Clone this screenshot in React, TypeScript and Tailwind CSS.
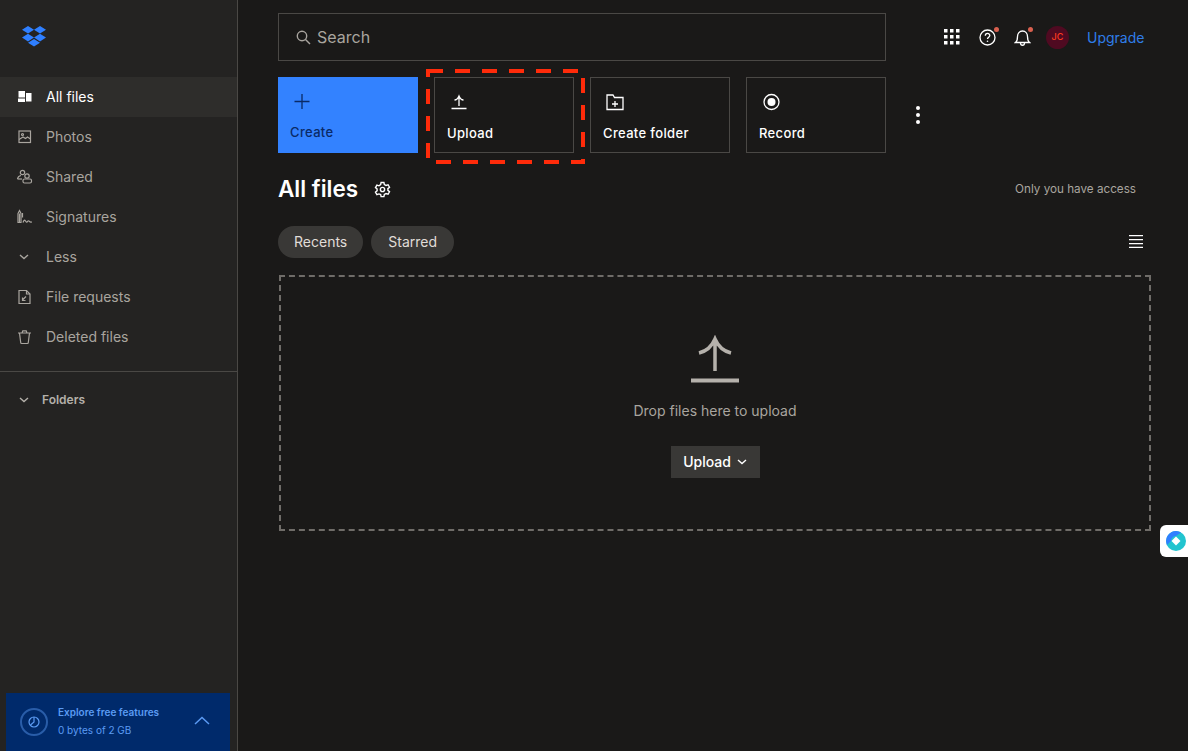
import type { ReactNode } from "react";

const font = "font-['Inter','Liberation_Sans',sans-serif]";

function Svg({ size = 18, children, className = "" }: { size?: number; children: ReactNode; className?: string }) {
  return (
    <svg width={size} height={size} viewBox="0 0 18 18" fill="none" stroke="currentColor" strokeWidth="1.2" className={className}>
      {children}
    </svg>
  );
}

const navItems: { label: string; active?: boolean; icon: ReactNode }[] = [
  {
    label: "All files",
    active: true,
    icon: (
      <Svg>
        <path d="M2.500 3h6.500v6.500H2.500zM2 10.500h7V14H2zM10 5h5.500v8.500H10z" fill="currentColor" stroke="none" />
      </Svg>
    ),
  },
  {
    label: "Photos",
    icon: (
      <Svg>
        <rect x="3" y="3" width="11.500" height="11.500" />
        <path d="M3 11.500 7 9l2.500 1.500 2-1.500 3 2" />
        <circle cx="6.500" cy="6.500" r="1" />
      </Svg>
    ),
  },
  {
    label: "Shared",
    icon: (
      <Svg>
        <circle cx="6.500" cy="4.500" r="2.200" />
        <path d="M1.500 11c.3-2 1.500-3.200 3.500-3.500" />
        <path d="M1.500 11H6" />
        <circle cx="11" cy="8" r="2.200" />
        <rect x="7" y="11" width="8.500" height="4" rx="1.500" />
      </Svg>
    ),
  },
  {
    label: "Signatures",
    icon: (
      <Svg>
        <path d="M2 5.500 3.500 2.500 5 5.500V14.500H2z" />
        <path d="M3.500 5.500V14.500M6.500 5v4.500" />
        <path d="M7 14.500c1-2.500 1.500-3 2.500-1.500s1 1.500 2 .5 1-1 2 0 1 .5 2.500.5" />
      </Svg>
    ),
  },
  {
    label: "Less",
    icon: (
      <Svg>
        <path d="m4 7 4 3.500L12 7" strokeWidth="1.400" />
      </Svg>
    ),
  },
  {
    label: "File requests",
    icon: (
      <Svg>
        <path d="M3 2.500h7.500L14 6v9.500H3z" />
        <path d="M10.500 2.500V6H14" />
        <path d="M10 8.500 6.500 12M6.500 9.500V12.500H9.500" />
      </Svg>
    ),
  },
  {
    label: "Deleted files",
    icon: (
      <Svg>
        <path d="M2 5h13M6 5l.8-2.200h3.400L11 5" />
        <path d="M3.500 5l1.200 9.500c0 .6.400 1 1 1h5.600c.6 0 1-.4 1-1L13.500 5" />
      </Svg>
    ),
  },
];

function Sidebar() {
  return (
    <aside className="flex h-full w-[238px] shrink-0 flex-col border-r border-[#4a4845] bg-[#242322]">
      <div className="flex h-[77px] items-start pl-[21px] pt-[26px]">
        <svg width="26" height="21" viewBox="0 0 26 21" fill="#2f7fff">
          <path d="M7 0l6 3.800L7 7.600 1 3.800zM19 0l6 3.800-6 3.800-6-3.800zM7 7.800l6 3.800-6 3.800-6-3.800zM19 7.800l6 3.800-6 3.800-6-3.800zM13 13l6 3.800L13 20.600 7 16.800z" />
        </svg>
      </div>
      <nav className="flex flex-col">
        {navItems.map((item) => (
          <div
            key={item.label}
            className={`flex h-10 items-center gap-[12px] pl-[16px] text-sm ${item.active ? "bg-[#2e2d2b] text-white" : "text-[#a9a59f]"}`}
          >
            {item.icon}
            <span>{item.label}</span>
          </div>
        ))}
      </nav>
      <div className="mt-[14px] border-t border-[#4a4845]" />
      <div className="mt-[19px] flex items-center gap-[8px] pl-[16px] text-xs font-semibold text-[#b4b0aa]">
        <Svg>
          <path d="m4 7 4 3.500L12 7" strokeWidth="1.400" />
        </Svg>
        <span>Folders</span>
      </div>
      <div className="mx-[6px] mt-auto flex h-[58px] w-[224px] items-center bg-[#002a6b] pl-[13px] pr-[20px] text-[#5b9bf3]">
        <svg width="30" height="30" viewBox="0 0 30 30" fill="none" stroke="currentColor">
          <circle cx="15" cy="15" r="13" strokeWidth="2" strokeOpacity="0.45" />
          <circle cx="15" cy="15" r="5" strokeWidth="1.200" />
          <path d="M15 10v5l-3.500 3" strokeWidth="1.200" />
        </svg>
        <div className="ml-[9px] flex -translate-y-[1px] flex-col gap-[2px] text-[10px] leading-4">
          <span className="font-semibold">Explore free features</span>
          <span>0 bytes of 2 GB</span>
        </div>
        <svg width="16" height="10" viewBox="0 0 16 10" fill="none" stroke="currentColor" strokeWidth="1.500" className="ml-auto -translate-y-[1px]">
          <path d="m1 8 7-6.500L15 8" />
        </svg>
      </div>
    </aside>
  );
}

function Dot({ className }: { className: string }) {
  return <span className={`absolute size-[5px] rounded-full bg-[#d9604f] ${className}`} />;
}

function TopBar() {
  return (
    <header className="flex h-12 items-center text-white">
      <div className="flex h-12 w-[608px] items-center gap-[5px] border border-[#4a4845] pl-[16px] text-base text-[#a9a59f]">
        <svg width="17" height="17" viewBox="0 0 17 17" fill="none" stroke="currentColor" strokeWidth="1.400">
          <circle cx="7" cy="7" r="4.700" />
          <path d="m10.500 10.500 4.500 4.500" />
        </svg>
        <span>Search</span>
      </div>
      <svg width="16" height="16" viewBox="0 0 16 16" fill="currentColor" className="ml-[58px]">
        <path d="M0 0h3.500v3.500H0zM6 0h3.500v3.500H6zM12 0h3.500v3.500H12zM0 6h3.500v3.500H0zM6 6h3.500v3.500H6zM12 6h3.500v3.500H12zM0 12h3.500v3.500H0zM6 12h3.500v3.500H6zM12 12h3.500v3.500H12z" />
      </svg>
      <div className="relative ml-[19px] size-[17px]">
        <svg width="17" height="17" viewBox="0 0 17 17" fill="none" stroke="currentColor" strokeWidth="1.300">
          <circle cx="8.500" cy="8.500" r="7.500" />
          <path d="M6.300 6.700c0-3 4.500-3 4.500-.2 0 1.600-2.300 1.700-2.300 3.400" />
          <circle cx="8.500" cy="12.300" r=".8" fill="currentColor" stroke="none" />
        </svg>
        <Dot className="-right-[3px] -top-[2px]" />
      </div>
      <div className="relative ml-[18px] size-[17px]">
        <svg width="17" height="17" viewBox="0 0 17 17" fill="none" stroke="currentColor" strokeWidth="1.300">
          <path d="M1.500 13.500c2-1.500 2-3 2-6 0-3 2-5.500 5-5.500s5 2.500 5 5.500c0 3 0 4.500 2 6z" />
          <path d="M6.500 14c0 3 4 3 4 0" />
        </svg>
        <Dot className="-right-[2px] -top-[2px]" />
      </div>
      <div className="ml-[15px] flex size-[23px] items-center justify-center rounded-full bg-[#4f0a21] text-[9px] font-medium text-[#ff3a1f]">
        JC
      </div>
      <span className="ml-[18px] translate-y-[1px] text-sm text-[#2f7de8]">Upgrade</span>
    </header>
  );
}

function ActionCard({ label, icon }: { label: string; icon: ReactNode }) {
  return (
    <div className="flex h-[76px] w-[140px] flex-col border border-[#4a4845] pl-[12px] text-white">
      <div className="mt-[15px] h-[18px]">{icon}</div>
      <span className="mt-[14px] text-[13px] font-medium leading-4 tracking-[0.35px]">{label}</span>
    </div>
  );
}

function Actions() {
  return (
    <div className="relative mt-4 flex items-center gap-4">
      <div className="flex h-[76px] w-[140px] flex-col bg-[#3382ff] pl-[12px] text-[#0a2a66]">
        <svg width="24" height="24" viewBox="0 0 24 24" fill="none" stroke="currentColor" strokeWidth="1.300" className="mt-[12px]">
          <path d="M12 5v15M4.500 12.500h15" />
        </svg>
        <span className="mt-[11px] text-[13px] font-medium leading-4 tracking-[0.35px]">Create</span>
      </div>
      <ActionCard
        label="Upload"
        icon={
          <svg width="24" height="18" viewBox="0 0 24 18" fill="none" stroke="currentColor" strokeWidth="1.300">
            <path d="M12 13V3M7.500 7c2 0 3.500-1.500 4.500-4 1 2.500 2.500 4 4.500 4M4.500 15.500h15" />
          </svg>
        }
      />
      <ActionCard
        label="Create folder"
        icon={
          <svg width="24" height="18" viewBox="0 0 24 18" fill="none" stroke="currentColor" strokeWidth="1.300">
            <path d="M4 2h6l1.500 2.500H20v12H4z" />
            <path d="M12 8v6M9 11h6" />
          </svg>
        }
      />
      <ActionCard
        label="Record"
        icon={
          <svg width="24" height="18" viewBox="0 0 24 18" fill="none" stroke="currentColor" strokeWidth="1.300">
            <circle cx="12.500" cy="9" r="7.500" />
            <circle cx="12.500" cy="9" r="4" fill="currentColor" stroke="none" />
          </svg>
        }
      />
      <div className="ml-[14px] flex flex-col gap-[3px]">
        <span className="size-[4px] rounded-full bg-white" />
        <span className="size-[4px] rounded-full bg-white" />
        <span className="size-[4px] rounded-full bg-white" />
      </div>
      {/* 赤い破線の注釈 */}
      <svg width="160" height="96" viewBox="0 0 160 96" fill="none" className="absolute -top-[8px] left-[148px]">
        <rect x="2" y="2" width="155" height="91" stroke="#ff2b0a" strokeWidth="4" strokeDasharray="15 12" />
      </svg>
    </div>
  );
}

function Dropzone() {
  return (
    <section className="ml-px mt-[17px] flex h-[256px] w-[872px] flex-col items-center border-2 border-dashed border-[#6f6c68] text-[#b5b1ab]">
      <svg width="50" height="50" viewBox="0 0 50 50" fill="none" stroke="currentColor" strokeWidth="3.500" className="mt-[58px]">
        <path d="M25 36V5M9 18c8-2 13-7 16-14 3 7 8 12 16 14" />
        <path d="M1 45.500h48" strokeWidth="4" />
      </svg>
      <p className="mt-[16px] text-sm leading-5 text-[#a9a59f]">Drop files here to upload</p>
      <button className="mt-[25px] flex h-8 w-[89px] items-center justify-center gap-[6px] bg-[#393836] text-sm font-medium text-white">
        Upload
        <svg width="10" height="6" viewBox="0 0 10 6" fill="none" stroke="currentColor" strokeWidth="1.400">
          <path d="m1 1 4 3.500L9 1" />
        </svg>
      </button>
    </section>
  );
}

export default function App() {
  return (
    <div className={`relative flex h-[751px] w-[1188px] overflow-hidden bg-[#1a1918] ${font}`}>
      <Sidebar />
      <main className="flex flex-1 flex-col pl-10 pt-[13px]">
        <TopBar />
        <Actions />
        <div className="mt-5 flex h-8 w-[858px] items-center text-white">
          <h1 className="text-[22.500px] font-semibold">All files</h1>
          <svg width="17" height="17" viewBox="0 0 24 24" fill="none" stroke="currentColor" strokeWidth="2" className="ml-[16px]">
            <circle cx="12" cy="12" r="3" />
            <path d="M10 2h4l.6 3 2.400 1.300 2.900-1 2 3.500-2.300 2a8 8 0 0 1 0 2.400l2.300 2-2 3.500-2.900-1-2.400 1.300-.6 3h-4l-.6-3L7 18.200l-2.900 1-2-3.500 2.300-2a8 8 0 0 1 0-2.400l-2.300-2 2-3.500 2.900 1L9.400 5z" />
          </svg>
          <span className="ml-auto translate-y-[1px] text-[11.700px] text-[#a9a59f]">Only you have access</span>
        </div>
        <div className="mt-[21px] flex w-[865px] items-center gap-2 text-sm text-[#e0ddd8]">
          <span className="flex h-8 items-center rounded-full bg-[#393836] px-4">Recents</span>
          <span className="flex h-8 w-[83px] items-center justify-center rounded-full bg-[#393836]">Starred</span>
          <svg width="14" height="13" viewBox="0 0 14 13" fill="none" stroke="white" strokeWidth="1.200" className="ml-auto -translate-y-[1px]">
            <path d="M0 .6h14M0 4.600h14M0 8.600h14M0 12.400h14" />
          </svg>
        </div>
        <Dropzone />
      </main>
      {/* 右端の拡張機能ボタン */}
      <div className="absolute right-0 top-[525px] flex h-8 w-7 items-center justify-end rounded-l-md bg-white pr-[2px]">
        <svg width="20" height="20" viewBox="0 0 20 20">
          <circle cx="10" cy="10" r="10" fill="#22c4cf" />
          <path d="M10 0a10 10 0 0 0-9 14l4-4a5 5 0 0 1 5-5l5-3.500A10 10 0 0 0 10 0z" fill="#2f7fff" />
          <path d="m10 5.500 4.500 4.500-4.500 4.500L5.500 10z" fill="white" />
        </svg>
      </div>
    </div>
  );
}
